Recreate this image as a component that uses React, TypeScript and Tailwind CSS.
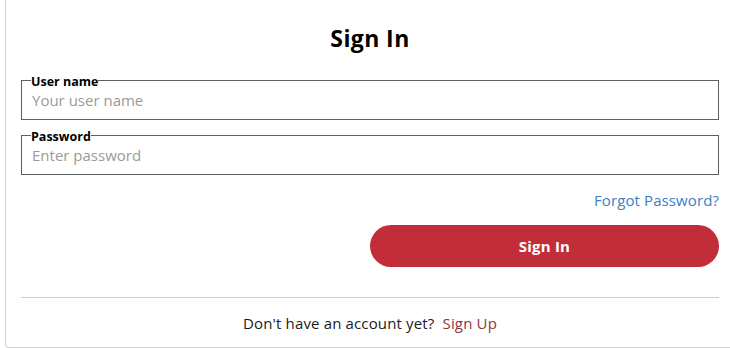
export default function App() {
  return (
    <div className="h-[348px] w-[730px] overflow-hidden bg-white" style={{ fontFamily: '"Open Sans", "Liberation Sans", sans-serif' }}>
      <div className="ml-[5px] w-[730px] h-[348px] border-l border-b border-[#cfcfcf] rounded-bl-[4px] pl-[15px] pr-[16px] pt-[24px] pb-[14px] flex flex-col">
        <h1 className="h-[28px] leading-[28px] text-[23px] tracking-[0.4px] font-bold text-center text-black">Sign In</h1>

        <div className="relative mt-[28px] h-[40px] border border-[#5f5f5f] flex items-center pl-[10px]">
          <span className="absolute left-[9px] top-[-5px] bg-white leading-none text-[12.5px] font-bold text-black">User name</span>
          <span className="text-[15px] text-[#9a9a9a] pt-[1px]">Your user name</span>
        </div>

        <div className="relative mt-[15px] h-[40px] border border-[#5f5f5f] flex items-center pl-[10px]">
          <span className="absolute left-[9px] top-[-5px] bg-white leading-none text-[12.5px] font-bold text-black">Password</span>
          <span className="text-[15px] text-[#9a9a9a] pt-[1px]">Enter password</span>
        </div>

        <div className="mt-[15px] h-[20px] leading-[20px] flex justify-end">
          <span className="text-[15px] tracking-[0.1px] text-[#3a80c3]">Forgot Password?</span>
        </div>

        <div className="mt-[15px] flex justify-end">
          <button className="w-1/2 h-[42px] rounded-full bg-[#c12d39] text-white text-[15px] tracking-[0.2px] font-bold">Sign In</button>
        </div>

        <div className="mt-[30px] h-px bg-[#cccccc]" />

        <div className="mt-[15px] h-[20px] leading-[20px] text-center text-[15px] tracking-[0.15px] text-[#1a1a1a]">
          Don't have an account yet?{"\u00a0 "}<span className="text-[#8f3440]">Sign Up</span>
        </div>
      </div>
    </div>
  );
}
